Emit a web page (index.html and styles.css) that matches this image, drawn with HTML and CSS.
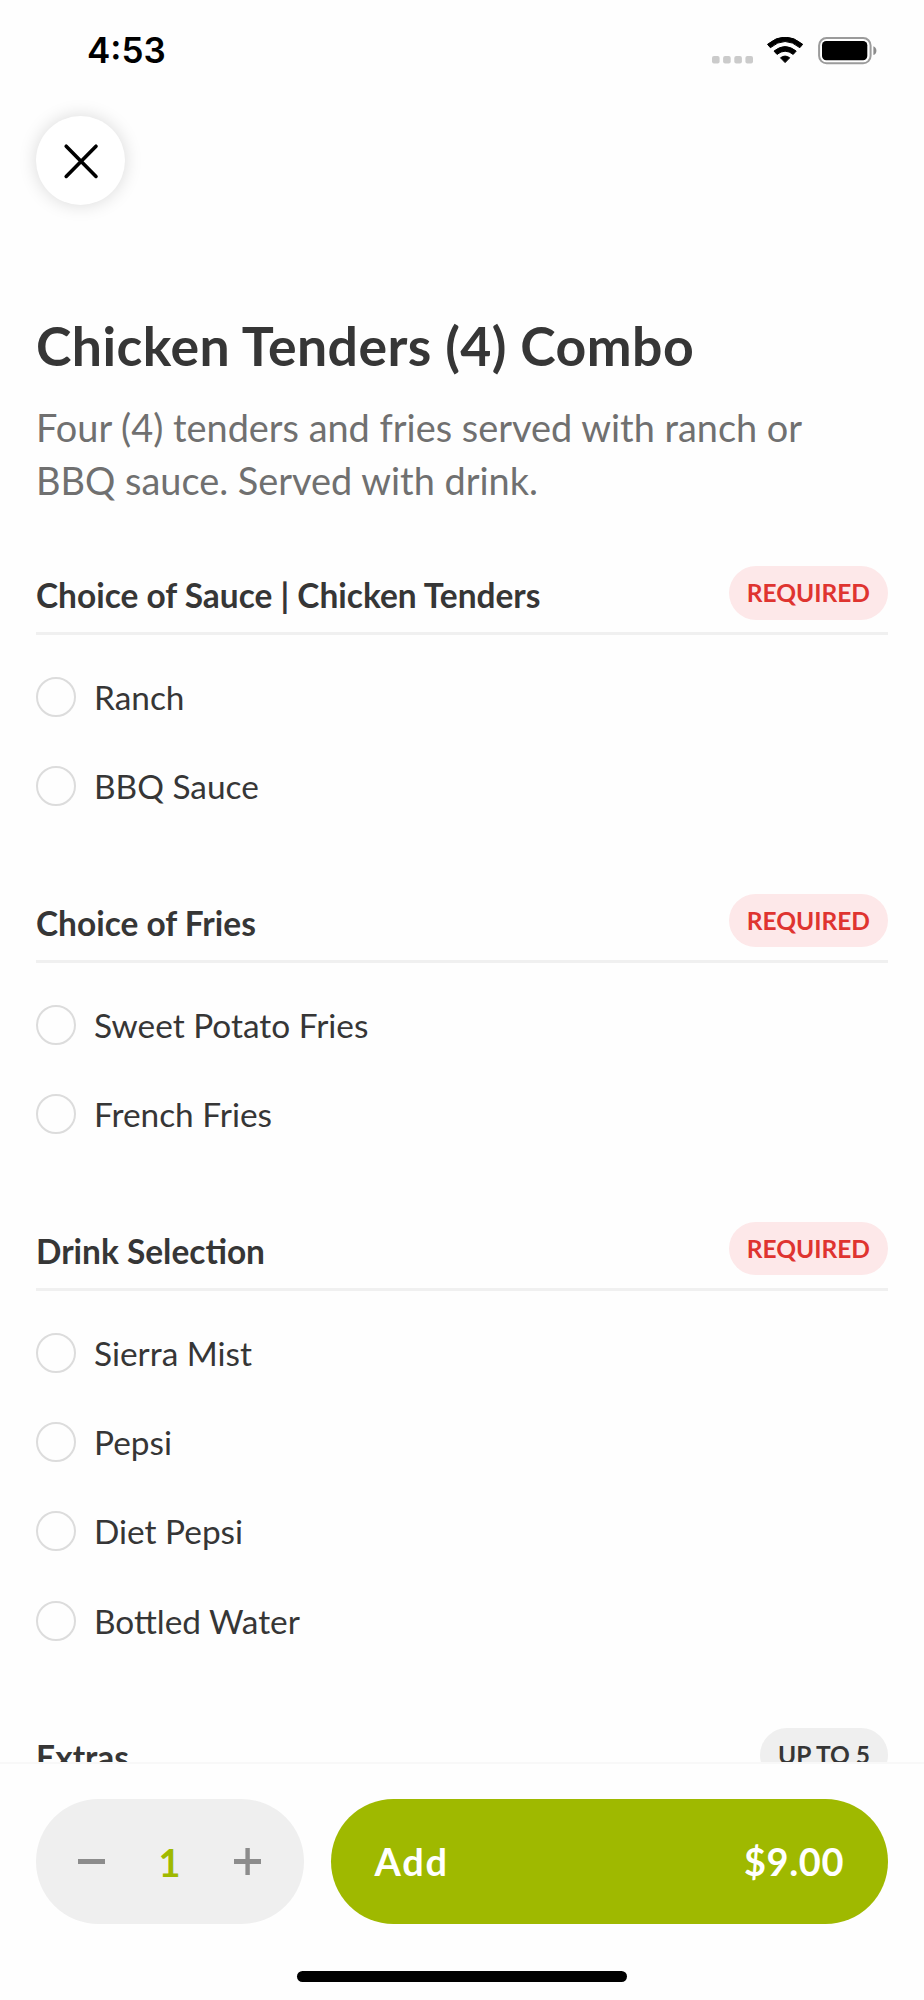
FILE: index.html
```html
<!DOCTYPE html>
<html lang="en">
<head>
<meta charset="utf-8">
<title>Chicken Tenders (4) Combo</title>
<link rel="stylesheet" href="styles.css">
</head>
<body>
<div class="screen">
  <header class="top">
    <div class="status">
      <span class="time">4:53</span>
      <svg class="status-icons" width="166" height="30" viewBox="0 0 166 30">
        <g fill="#cbcbcb">
          <rect x="0" y="19" width="7.6" height="7.6" rx="2"/>
          <rect x="11.1" y="19" width="7.6" height="7.6" rx="2"/>
          <rect x="22.3" y="19" width="7.6" height="7.6" rx="2"/>
          <rect x="33.4" y="19" width="7.6" height="7.6" rx="2"/>
        </g>
        <path d="M55.5 7.3Q73.1-7.3 90.7 7.3L87.8 10.7Q73.1-1.7 58.4 10.7Z" fill="#000" stroke="#000" stroke-width="1" stroke-linejoin="round"/>
        <path d="M62 14.1Q73.1 5 84.2 14.1L81.2 17.4Q73.1 11 65 17.4Z" fill="#000" stroke="#000" stroke-width="1" stroke-linejoin="round"/>
        <path d="M68.5 20.8Q73.1 17.4 77.7 20.8L73.1 25.6Z" fill="#000" stroke="#000" stroke-width="1" stroke-linejoin="round"/>
        <rect x="107.1" y="1" width="51.5" height="25.3" rx="7.5" fill="none" stroke="#9b9b9b" stroke-width="2"/>
        <rect x="110" y="4" width="45.3" height="19.3" rx="4.2"/>
        <path d="M161.4 9.3q3 1.1 3 4.4t-3 4.4z" fill="#8d8d8d"/>
      </svg>
    </div>
    <button class="close" aria-label="Close">
      <svg width="36" height="36" viewBox="0 0 36 36" fill="none" stroke="#000" stroke-width="3.6" stroke-linecap="round"><path d="M3.2 3.2 33 33.4M33 3.2 3.2 33.4"/></svg>
    </button>
  </header>
  <main class="content">
    <h1 class="title">Chicken Tenders (4) Combo</h1>
    <p class="description">Four (4) tenders and fries served with ranch or BBQ sauce. Served with drink.</p>

    <section class="group">
      <div class="group-head"><h2 class="group-title">Choice of Sauce | Chicken Tenders</h2><span class="badge">REQUIRED</span></div>
      <ul class="options">
        <li class="option"><span class="radio"></span>Ranch</li>
        <li class="option"><span class="radio"></span>BBQ Sauce</li>
      </ul>
    </section>
    <section class="group">
      <div class="group-head"><h2 class="group-title">Choice of Fries</h2><span class="badge">REQUIRED</span></div>
      <ul class="options">
        <li class="option"><span class="radio"></span>Sweet Potato Fries</li>
        <li class="option"><span class="radio"></span>French Fries</li>
      </ul>
    </section>
    <section class="group">
      <div class="group-head"><h2 class="group-title">Drink Selection</h2><span class="badge">REQUIRED</span></div>
      <ul class="options">
        <li class="option"><span class="radio"></span>Sierra Mist</li>
        <li class="option"><span class="radio"></span>Pepsi</li>
        <li class="option"><span class="radio"></span>Diet Pepsi</li>
        <li class="option"><span class="radio"></span>Bottled Water</li>
      </ul>
    </section>
    <section class="group">
      <div class="group-head"><h2 class="group-title">Extras</h2><span class="badge badge-neutral">UP TO 5</span></div>
    </section>
  </main>
  <footer class="footer">
    <div class="actions">
      <div class="stepper">
        <svg width="27" height="27" viewBox="0 0 27 27"><path d="M0 11h27v5H0z" fill="#8c8c8c"/></svg>
        <span class="count">1</span>
        <svg width="27" height="27" viewBox="0 0 27 27"><path d="M0 11h11.4V0h4.4v11H27v5H15.800v11h-4.400V16H0z" fill="#8c8c8c"/></svg>
      </div>
      <button class="add"><span class="add-label">Add</span><span class="price">$9.00</span></button>
    </div>
    <div class="home-bar"></div>
  </footer>
</div>
</body>
</html>
```

FILE: styles.css
```css
* { box-sizing: border-box; }
body { margin: 0; background: #fff; }
h1, h2, p, ul { margin: 0; padding: 0; font-weight: 400; }
button { border: 0; padding: 0; font: inherit; }

.screen {
  display: flex;
  flex-direction: column;
  width: 924px;
  height: 2000px;
  overflow: hidden;
  background: #fefefe;
  color: #363636;
  font-family: Lato, sans-serif;
}

.top { flex: none; height: 313px; }
.status {
  display: flex;
  justify-content: space-between;
  height: 116px;
  padding: 30px 46px 0 87px;
}
.time {
  font: 600 35px/41px Inter, sans-serif;
  color: #000;
}
.status-icons { margin-top: 7px; }
.close {
  display: flex;
  align-items: center;
  justify-content: center;
  width: 89px;
  height: 89px;
  margin-left: 36px;
  border-radius: 50%;
  background: #fff;
  box-shadow: 0 0 18px rgba(0, 0, 0, .15);
}

.content {
  flex: 1;
  min-height: 0;
  overflow: hidden;
  padding: 0 36px;
}
.title {
  font-size: 53.57px;
  line-height: 64px;
  font-weight: 700;
  letter-spacing: .42px;
}
.description {
  margin-top: 23.5px;
  margin-bottom: 58.4px;
  font-size: 37.9px;
  line-height: 53.57px;
  color: #707070;
}
.group { margin-bottom: 63px; }
.group-head {
  display: flex;
  justify-content: space-between;
  align-items: flex-start;
  height: 69px;
  border-bottom: 3px solid #f0f0f0;
}
.group-title {
  padding-top: 9px;
  font-size: 33.45px;
  line-height: 40px;
  font-weight: 700;
}
.badge {
  padding: 0 18px;
  border-radius: 27px;
  background: #fde8e9;
  color: #df3430;
  font-size: 24.5px;
  line-height: 53.5px;
  font-weight: 700;
}
.badge-neutral { background: #efefef; color: #363636; }
.options { padding-top: 17.3px; list-style: none; }
.option {
  display: flex;
  align-items: center;
  gap: 18px;
  height: 89.3px;
  font-size: 33.4px;
  line-height: 40px;
}
.radio {
  width: 40px;
  height: 40px;
  border: 2px solid #dcdcdc;
  border-radius: 50%;
}

.footer {
  flex: none;
  height: 238px;
  padding: 35px 36px 0;
  border-top: 2px solid #f8f8f8;
  background: #fefefe;
}
.actions { display: flex; gap: 27px; height: 125px; }
.stepper {
  display: flex;
  align-items: center;
  justify-content: space-between;
  width: 267.500px;
  padding: 0 42.500px 0 42px;
  border-radius: 62.5px;
  background: #efefef;
}
.count {
  padding-top: 2px;
  color: #9fb900;
  font-size: 37.95px;
  line-height: 46px;
  font-weight: 700;
}
.add {
  display: flex;
  flex: 1;
  align-items: center;
  justify-content: space-between;
  padding: 0 44px;
  border-radius: 62.5px;
  background: #9fb900;
  color: #fff;
  font-size: 37.95px;
  line-height: 46px;
  font-weight: 700;
}
.add-label { letter-spacing: 1.8px; }
.price { letter-spacing: .6px; }
.home-bar {
  width: 330px;
  height: 11px;
  margin: 47px auto 0;
  border-radius: 6px;
  background: #000;
}
```
